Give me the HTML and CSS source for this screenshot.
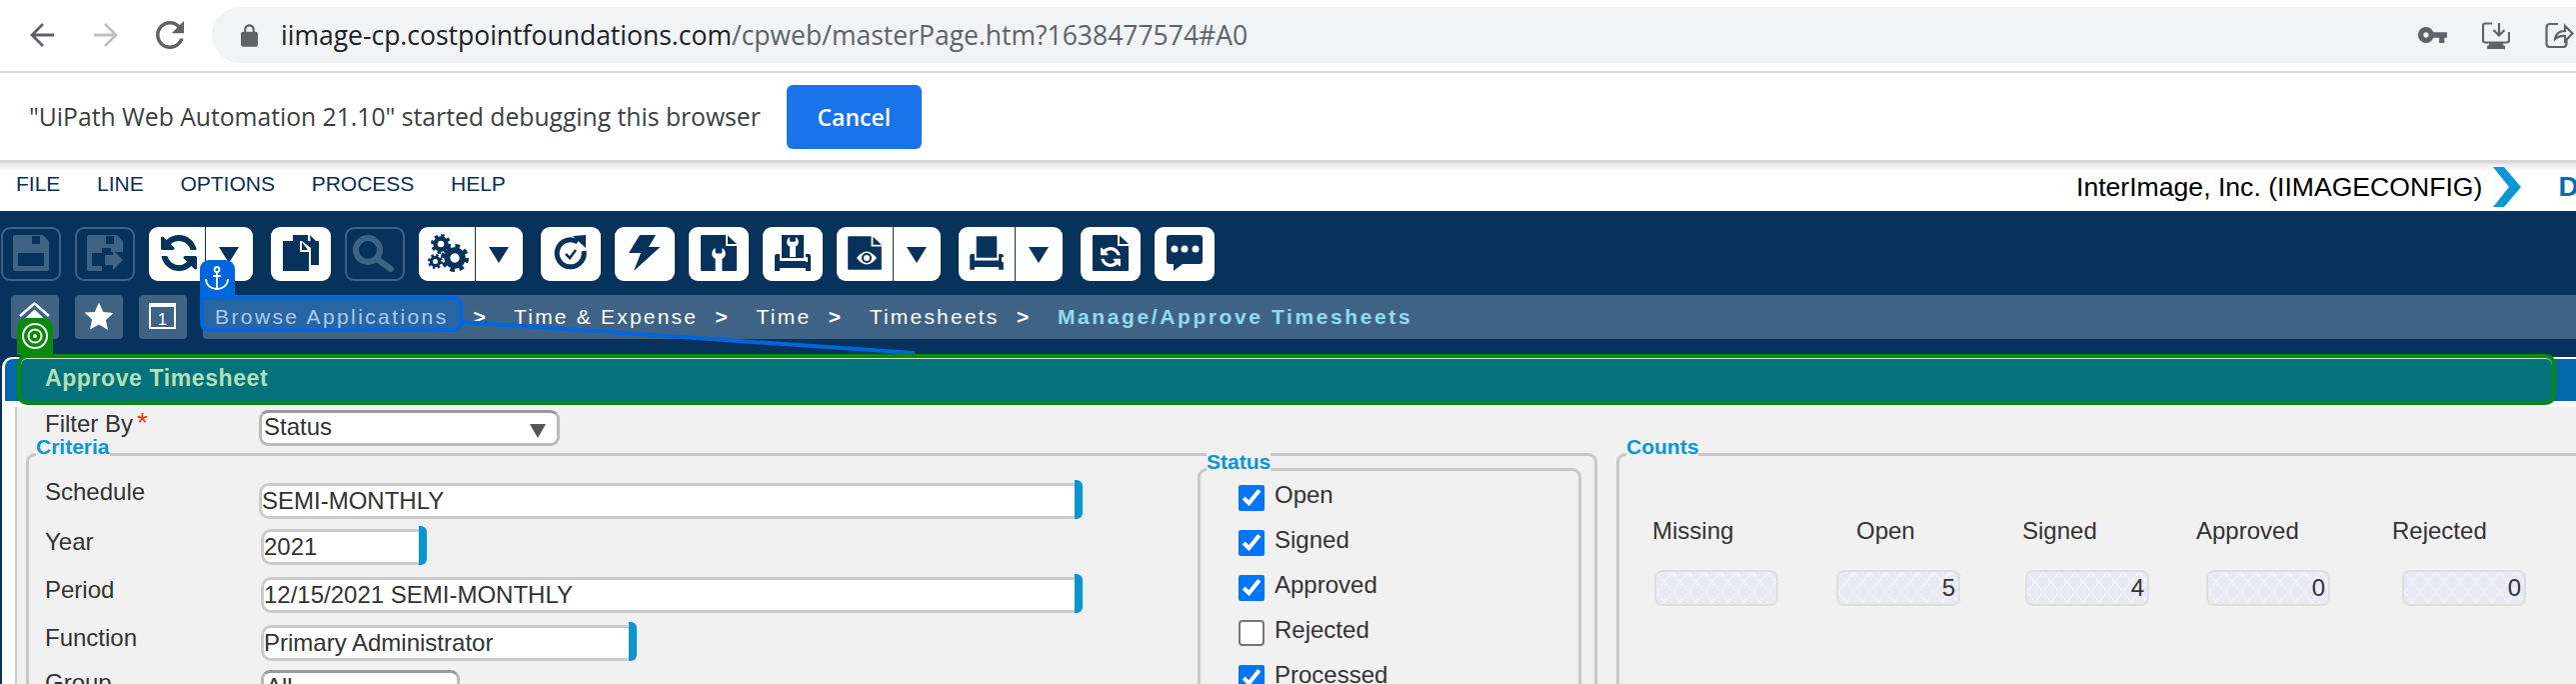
FILE: index.html
```html
<!DOCTYPE html>
<html lang="en">
<head>
    <meta charset="UTF-8">
    <title>Approve Timesheet</title>
    <link rel="stylesheet" href="styles.css">
</head>
<body>
    <svg class="sprite" width="0" height="0">
        <symbol id="sync" viewBox="0 0 1536 1536">
            <path transform="translate(1536 0) scale(-1 1)" d="M1511 928q0 5-1 7-64 268-268 434.5t-478 166.5q-146 0-282.5-55t-243.5-157l-129 129q-19 19-45 19t-45-19-19-45v-448q0-26 19-45t45-19h448q26 0 45 19t19 45-19 45l-137 137q71 66 161 102t187 36q134 0 250-65t186-179q11-17 53-117 8-23 30-23h192q13 0 22.5 9.5t9.5 22.5zm25-800v448q0 26-19 45t-45 19h-448q-26 0-45-19t-19-45 19-45l138-138q-148-137-349-137-134 0-250 65t-186 179q-11 17-53 117-8 23-30 23h-199q-13 0-22.5-9.5t-9.5-22.5v-7q65-268 270-434.5t480-166.5q146 0 284 55.5t245 156.5l130-129q19-19 45-19t45 19 19 45z"/>
        </symbol>
        <symbol id="gear" viewBox="0 0 24 24">
            <circle cx="12" cy="12" r="6.6" fill="none" stroke="currentColor" stroke-width="5.2"/>
            <circle cx="12" cy="12" r="10" fill="none" stroke="currentColor" stroke-width="4" stroke-dasharray="3.9 3.95"/>
        </symbol>
        <symbol id="doc" viewBox="0 0 60 54">
            <path d="M12 9q0-1 1-1h24v11h11v24q0 1-1 1H13q-1 0-1-1z"/>
            <path d="M39 8.500l9 8.500h-9z"/>
        </symbol>
        <symbol id="floppy" viewBox="0 0 60 54">
            <path fill-rule="evenodd" d="M12 10q0-2 2-2h28l6 6v28q0 2-2 2H14q-2 0-2-2zM31 9v8h8V9zM17 26v13h26V26z"/>
        </symbol>
        <symbol id="printer" viewBox="0 0 60 54">
            <path d="M19 8h22v23H19z"/>
            <path d="M12 29q0-2 2-2h3v7h26v-7h3q2 0 2 2v15h-5v-3H17v3h-5z"/>
        </symbol>
        <symbol id="wrench" viewBox="0 0 20 34">
            <path d="M5 0v6q0 2 2 2h6q2 0 2-2V0q5 3 5 8 0 6-5 8v18H5V16Q0 14 0 8 0 3 5 0z"/>
        </symbol>
    </svg>

    <header class="omnibar">
        <div class="nav-btns">
            <svg class="nav-arrow" viewBox="0 0 28 28"><path d="M26 14H4M15 3 4 14l11 11"/></svg>
            <svg class="nav-arrow nav-arrow-off" viewBox="0 0 28 28"><path d="M2 14h22M13 3l11 11-11 11"/></svg>
            <svg class="nav-reload" viewBox="4 4 16 16"><path d="M17.650 6.350C16.200 4.900 14.210 4 12 4c-4.420 0-7.990 3.580-7.990 8s3.570 8 7.990 8c3.730 0 6.840-2.550 7.730-6h-2.080c-.82 2.330-3.040 4-5.650 4-3.310 0-6-2.690-6-6s2.690-6 6-6c1.660 0 3.140.69 4.220 1.780L13 11h7V4l-2.350 2.350z"/></svg>
        </div>
        <div class="omnibox">
            <svg class="lock" viewBox="4 1 16 21"><path d="M18 8h-1V6c0-2.760-2.240-5-5-5S7 3.240 7 6v2H6c-1.100 0-2 .9-2 2v10c0 1.100.9 2 2 2h12c1.100 0 2-.9 2-2V10c0-1.100-.9-2-2-2zM9 6c0-1.660 1.340-3 3-3s3 1.340 3 3v2H9V6z"/></svg>
            <div class="url">iimage-cp.costpointfoundations.com<span class="url-path">/cpweb/masterPage.htm?1638477574#A0</span></div>
            <div class="omni-icons">
                <svg class="omni-key" viewBox="1 6 22 12"><path d="M12.650 10C11.830 7.670 9.610 6 7 6c-3.310 0-6 2.690-6 6s2.690 6 6 6c2.610 0 4.830-1.670 5.650-4H17v4h4v-4h2v-4H12.650zM7 14c-1.100 0-2-.9-2-2s.9-2 2-2 2 .9 2 2-.9 2-2 2z"/></svg>
                <svg class="omni-save" viewBox="0 0 28 27"><path class="omni-line" d="M10 1.500H3q-2 0-2 2v15q0 2 2 2h22q2 0 2-2V10M17 1v12M11.500 8l5.500 5.500L22.500 8"/><path d="M7 20h14v3l2 1v3H5v-3l2-1z"/></svg>
                <svg class="omni-share" viewBox="0 0 29 26"><path class="omni-line" d="M13 2H5Q1.500 2 1.500 5.500v16Q1.500 25 5 25h13q3.500 0 3.500-3.500V18M10 17q1-8 10-8V4l7.500 7.500L20 19v-5q-6-.5-10 3z"/></svg>
            </div>
        </div>
    </header>

    <div class="infobar">
        <span class="info-text">"UiPath Web Automation 21.10" started debugging this browser</span>
        <button type="button" class="cancel-btn">Cancel</button>
    </div>

    <nav class="menubar">
        <a>FILE</a>
        <a>LINE</a>
        <a>OPTIONS</a>
        <a>PROCESS</a>
        <a>HELP</a>
        <div class="company">
            <span class="company-name">InterImage, Inc. (IIMAGECONFIG)</span>
            <svg class="company-chevron" viewBox="0 0 28 40"><path d="M0 0h11l17 20-17 20H0l16-20z"/></svg>
            <span class="company-next">D</span>
        </div>
    </nav>

    <div class="toolbar">
        <button class="tool tool-off"><svg viewBox="0 0 60 54"><use href="#floppy"/></svg></button>
        <button class="tool tool-off"><svg viewBox="0 0 60 54"><path fill-rule="evenodd" d="M12 10q0-2 2-2h28l6 6v11H36v-4l-9 0v5H17v13h10v5H14q-2 0-2-2zM31 9v8h8V9z"/><path d="M30 28h8v-5l10 10-10 10v-5h-8z"/></svg></button>
        <div class="tool tool-split">
            <svg class="tool-main" viewBox="0 0 56 54"><use href="#sync" x="12" y="8" width="36" height="36"/></svg>
            <span class="caret"></span>
        </div>
        <button class="tool"><svg viewBox="0 0 60 54"><path d="M22 8h15v6l11 0v24h-8V21l-9-7h-9z"/><path d="M39 8l9 9h-8z"/><path d="M12 14h17v11h9v19H12z"/><path d="M31 15l6 8h-6z"/></svg></button>
        <button class="tool tool-off"><svg viewBox="0 0 60 54"><circle cx="23" cy="23" r="12" fill="none" stroke="currentColor" stroke-width="6"/><path d="M32 32l14 10" stroke="currentColor" stroke-width="6" stroke-linecap="round"/></svg></button>
        <div class="tool tool-split">
            <svg class="tool-main" viewBox="0 0 56 54"><use href="#gear" x="12" y="7" width="20" height="20"/><use href="#gear" x="9" y="27" width="15" height="15"/><use href="#gear" x="22" y="17" width="28" height="28"/></svg>
            <span class="caret"></span>
        </div>
        <button class="tool"><svg viewBox="0 0 60 54"><path d="M37 15A13.500 13.500 0 1 0 43 24" fill="none" stroke="currentColor" stroke-width="5"/><path d="M32 9l13-1 0 13z"/><path d="M25 27l4 4 6-8" fill="none" stroke="currentColor" stroke-width="2.500"/></svg></button>
        <button class="tool"><svg viewBox="0 0 60 54"><path d="M41 8H25L14 26h12l-7 18 26.500-24H34z"/></svg></button>
        <button class="tool"><svg viewBox="0 0 60 54"><use href="#doc"/><use href="#wrench" class="icon-white" x="23" y="21" width="14" height="23"/></svg></button>
        <button class="tool"><svg viewBox="0 0 60 54"><use href="#printer"/><use href="#wrench" class="icon-white" x="24" y="10" width="12" height="20"/><path class="icon-white" d="M43 30h2v5h-2z"/></svg></button>
        <div class="tool tool-split">
            <svg class="tool-main" viewBox="0 0 56 54"><use href="#doc"/><path class="icon-white" d="M20 31q5-6.500 10-6.500T40 31q-5 6.500-10 6.500T20 31z"/><circle cx="30" cy="31" r="4" fill="none" stroke="currentColor" stroke-width="2"/></svg>
            <span class="caret"></span>
        </div>
        <div class="tool tool-split">
            <svg class="tool-main" viewBox="0 0 56 54"><use href="#printer"/><path class="icon-white" d="M43 30h2v5h-2z"/></svg>
            <span class="caret"></span>
        </div>
        <button class="tool"><svg viewBox="0 0 60 54"><use href="#doc"/><use href="#sync" class="icon-white" x="20" y="20" width="20" height="20"/></svg></button>
        <button class="tool"><svg viewBox="0 0 60 54"><path d="M15 8h30q3 0 3 3v23q0 3-3 3H28l-9 7v-7h-4q-3 0-3-3V11q0-3 3-3z"/><circle class="icon-white" cx="20" cy="22" r="3.500"/><circle class="icon-white" cx="30" cy="22" r="3.500"/><circle class="icon-white" cx="41" cy="22" r="3.500"/></svg></button>
    </div>

    <div class="navrow">
        <a class="navsq"><svg viewBox="0 0 48 44"><path d="M9 21 23.500 8.500 38 21" fill="none" stroke="#fff" stroke-width="2.500"/><path d="M10 27 23.500 14.500 37 27z" fill="#fff"/></svg></a>
        <a class="navsq"><svg viewBox="0 0 48 44"><path d="M24 7.500l4.300 9.500 10.200 1.100-7.600 6.900 2.100 10.100L24 29.500l-9 5.100 2.100-10.100-7.600-6.900L19.700 17z" fill="#fff"/></svg></a>
        <a class="navsq"><svg viewBox="0 0 48 44"><rect x="11" y="9" width="25" height="24" fill="none" stroke="#fff" stroke-width="2"/><path d="M10 8h27v4H10z" fill="#fff"/><text x="23.500" y="30" class="cal-num">1</text></svg></a>
        <div class="crumbs">
            <a class="crumb-first">Browse Applications</a><i class="sep-first">&gt;</i>
            <a>Time &amp; Expense</a><i>&gt;</i>
            <a>Time</a><i>&gt;</i>
            <a>Timesheets</a><i>&gt;</i>
            <b>Manage/Approve Timesheets</b>
        </div>
    </div>

    <main class="panel">
        <div class="panel-head"><h1 class="panel-title">Approve Timesheet</h1></div>
        <div class="panel-body">
            <div class="filter-row">
                <label class="filter-label">Filter By<span class="req">*</span></label>
                <div class="select select-filter">Status</div>
            </div>

            <div class="groups">
                <section class="group group-criteria">
                    <h2 class="group-title">Criteria</h2>
                    <div class="criteria-inner">
                        <div class="criteria-form">
                            <label class="row-label row-label-first">Schedule</label>
                            <div class="field field-req field-first"><input type="text" value="SEMI-MONTHLY"></div>
                            <label class="row-label">Year</label>
                            <div class="field field-req field-year"><input type="text" value="2021"></div>
                            <label class="row-label">Period</label>
                            <div class="field field-req"><input type="text" value="12/15/2021 SEMI-MONTHLY"></div>
                            <label class="row-label">Function</label>
                            <div class="field field-req field-func"><input type="text" value="Primary Administrator"></div>
                            <label class="row-label">Group</label>
                            <div class="select select-group">All</div>
                        </div>

                        <section class="group group-status">
                            <h2 class="group-title">Status</h2>
                            <div class="checks">
                                <label class="check"><input type="checkbox" checked><span>Open</span></label>
                                <label class="check"><input type="checkbox" checked><span>Signed</span></label>
                                <label class="check"><input type="checkbox" checked><span>Approved</span></label>
                                <label class="check"><input type="checkbox"><span>Rejected</span></label>
                                <label class="check"><input type="checkbox" checked><span>Processed</span></label>
                            </div>
                        </section>
                    </div>
                </section>

                <section class="group group-counts">
                    <h2 class="group-title">Counts</h2>
                    <div class="counts">
                        <span class="count-label lbl-missing">Missing</span>
                        <span class="count-label lbl-open">Open</span>
                        <span class="count-label lbl-signed">Signed</span>
                        <span class="count-label lbl-approved">Approved</span>
                        <span class="count-label lbl-rejected">Rejected</span>
                        <div class="count-box"></div>
                        <div class="count-box">5</div>
                        <div class="count-box">4</div>
                        <div class="count-box">0</div>
                        <div class="count-box">0</div>
                    </div>
                </section>
            </div>
        </div>
    </main>

    <!-- highlight drawn by the automation tool, sits over the page -->
    <div class="hl-target"></div>
    <div class="hl-target-tag">
        <svg viewBox="0 0 28 28" width="28" height="28"><circle cx="14" cy="14" r="12" /><circle cx="14" cy="14" r="6.500"/><circle class="hl-dot" cx="14" cy="14" r="2"/></svg>
    </div>
    <svg class="hl-line" width="2577" height="684"><path d="M463 322 915 353"/></svg>
    <div class="hl-anchor-tag">
        <svg viewBox="0 0 24 24" width="24" height="24"><circle cx="12" cy="3.500" r="2.500"/><path d="M12 6v17M8 10h8M1 13c0 6 5 10 11 10s11-4 11-10"/></svg>
    </div>
    <div class="hl-anchor"></div>
</body>
</html>
```

FILE: styles.css
```css
* {
    box-sizing: border-box;
}
html, body {
    margin: 0;
    height: 684px;
    overflow: hidden;
}
body {
    position: relative;
    display: flex;
    flex-direction: column;
    background-color: #06325c;
    font-family: "Liberation Sans", Arial, sans-serif;
    color: #333;
}
.sprite {
    position: absolute;
}
button {
    font-family: inherit;
}

/* browser chrome */
.omnibar {
    height: 73px;
    flex: none;
    display: flex;
    padding: 7px 0 8px 28px;
    background-color: #fff;
    border-bottom: 2px solid #dadce0;
}
.nav-btns {
    display: flex;
    align-items: center;
    gap: 36px;
    margin-right: 28px;
}
.nav-arrow {
    width: 28px;
    height: 28px;
    fill: none;
    stroke: #5f6368;
    stroke-width: 2.8;
}
.nav-arrow-off {
    stroke: #bdc1c6;
}
.nav-reload {
    width: 28px;
    height: 28px;
    fill: #5f6368;
}
.omnibox {
    flex: 1;
    display: flex;
    align-items: center;
    padding: 0 2px 0 29px;
    background-color: #f1f3f4;
    border-radius: 28px 0 0 28px;
}
.lock {
    width: 17px;
    height: 23px;
    fill: #5f6368;
    margin-right: 23px;
}
.url {
    font-family: "Open Sans", sans-serif;
    font-size: 26.500px;
    color: #202124;
    white-space: nowrap;
}
.url-path {
    color: #5f6368;
}
.omni-icons {
    margin-left: auto;
    display: flex;
    align-items: center;
    gap: 35px;
    fill: #5f6368;
}
.omni-key {
    width: 29px;
    height: 16px;
}
.omni-save {
    width: 28px;
    height: 27px;
}
.omni-share {
    width: 29px;
    height: 26px;
}
.omni-line {
    fill: none;
    stroke: #5f6368;
    stroke-width: 2.200;
}
.infobar {
    height: 90px;
    flex: none;
    display: flex;
    align-items: center;
    padding-left: 29px;
    gap: 26px;
    background-color: #fff;
    border-bottom: 3px solid #d6d6d6;
}
.info-text {
    font-family: "Open Sans", sans-serif;
    font-size: 24.700px;
    color: #3c4043;
}
.cancel-btn {
    width: 135px;
    height: 64px;
    background-color: #1a73e8;
    color: #fff;
    border: none;
    border-radius: 6px;
    font-family: "Open Sans", sans-serif;
    font-size: 23px;
    font-weight: 600;
}

/* app menu */
.menubar {
    height: 48px;
    flex: none;
    display: flex;
    align-items: center;
    gap: 36.700px;
    padding: 0 0 6px 16px;
    background: linear-gradient(#e6e6e6, #fff 8px);
    color: #0b2f55;
    font-size: 21px;
}
.company {
    margin: 0 0 -6px auto;
    align-self: stretch;
    display: flex;
    align-items: center;
    font-size: 26.600px;
    color: #000;
    width: 500px;
    overflow: hidden;
    flex: none;
    white-space: nowrap;
}
.company-name {
    flex: none;
}
.company-chevron {
    width: 28px;
    height: 40px;
    fill: #0a97d6;
    margin: 0 37px 0 11px;
    flex: none;
}
.company-next {
    color: #0a6ab0;
    font-size: 28px;
    font-weight: bold;
}

/* icon toolbar */
.toolbar {
    flex: none;
    display: flex;
    gap: 14px;
    padding: 16px 0 0 1px;
}
.tool {
    width: 60px;
    height: 54px;
    padding: 0;
    background-color: #fff;
    border: none;
    border-radius: 9px;
    color: #06325c;
    fill: #06325c;
    display: block;
}
.tool svg {
    display: block;
    width: 60px;
    height: 54px;
}
.tool-off {
    background: transparent;
    border: 2px solid #3f6384;
    color: #3f6384;
    fill: #3f6384;
}
.tool-off svg {
    margin: -2px;
}
.tool-split {
    width: 104px;
    display: flex;
    margin-right: 4px;
}
.tool .tool-main {
    width: 57px;
    flex: none;
    border-right: 1.500px solid #06325c;
}
.caret {
    width: 0;
    height: 0;
    margin: 20px 0 0 13px;
    border-left: 10px solid transparent;
    border-right: 10px solid transparent;
    border-top: 16px solid #06325c;
}
.icon-white {
    fill: #fff;
}

/* nav squares and breadcrumb */
.navrow {
    flex: none;
    display: flex;
    gap: 16px;
    height: 44px;
    margin-top: 14px;
    padding-left: 11px;
}
.navsq {
    width: 48px;
    background-color: #3f6384;
    border-radius: 4px;
}
.navsq svg {
    display: block;
    width: 48px;
    height: 44px;
}
.cal-num {
    fill: #fff;
    font-size: 17px;
    text-anchor: middle;
}
.crumbs {
    flex: 1;
    display: flex;
    align-items: center;
    padding-left: 12px;
    background-color: #3f6384;
    border-radius: 4px 0 0 4px;
    color: #fff;
    font-size: 21px;
    letter-spacing: 2.200px;
    white-space: nowrap;
}
.crumbs .crumb-first {
    letter-spacing: 2.400px;
}
.crumbs i {
    font-style: normal;
    font-weight: bold;
    margin: 0 26.500px 0 17.500px;
}
.crumbs .sep-first {
    margin: 0 26px 0 25px;
}
.crumbs b {
    color: #8fdcec;
    letter-spacing: 2.600px;
}

/* panel */
.panel {
    flex: 1;
    margin: 18px 0 0 2px;
    padding: 2px 0 0 3px;
    background-color: #fff;
    border-radius: 10px 0 0 0;
    display: flex;
    flex-direction: column;
    min-height: 0;
}
.panel-head {
    height: 42px;
    flex: none;
    padding-left: 40px;
    background-color: #0068ab;
    border-radius: 8px 0 0 0;
}
.panel-title {
    position: relative;
    z-index: 2;
    margin: 0;
    line-height: 38px;
    font-size: 23px;
    letter-spacing: 0.600px;
    color: #b5dfb5;
}
.panel-body {
    flex: 1;
    min-height: 0;
    margin: 6px 0 0 10px;
    border-left: 2px solid #c8c8c8;
    background-color: #f1f1f1;
    overflow: hidden;
    font-size: 24px;
}
.filter-row {
    display: flex;
    margin-top: 3px;
    padding-left: 28px;
    height: 36px;
}
.filter-label {
    width: 214px;
    line-height: 28px;
}
.req {
    color: #f03a17;
    font-size: 28px;
    margin-left: 4px;
    line-height: 20px;
}
.select {
    position: relative;
    height: 36px;
    padding-left: 2px;
    line-height: 28px;
    background-color: #fff;
    border: 3px solid #bbb;
    border-top-color: #999;
    border-radius: 9px;
}
.select::after {
    content: "";
    position: absolute;
    top: 11px;
    right: 11px;
    border-left: 8px solid transparent;
    border-right: 8px solid transparent;
    border-top: 14px solid #555;
}
.select-filter {
    width: 301px;
}
.select-group {
    width: 199px;
}

/* fieldset-like groups */
.groups {
    display: flex;
    gap: 19px;
    margin-top: 7px;
    padding-left: 9px;
}
.group {
    border: 3px solid #c8c8c8;
    border-radius: 9px;
}
.group-title {
    width: fit-content;
    margin: -22px 0 0 7px;
    padding: 0;
    background-color: #f1f1f1;
    color: #0b96d8;
    font-size: 21px;
    line-height: 26px;
}
.group-criteria {
    flex: none;
    width: 1572px;
    height: 400px;
}
.criteria-inner {
    display: flex;
}
.criteria-form {
    width: 1169px;
    flex: none;
    margin-top: 23px;
    padding-left: 16px;
    display: grid;
    grid-template-columns: 216px 822px;
    grid-template-rows: 46px 48px 48px 45px 36px;
}
.row-label {
    line-height: 26px;
}
.row-label-first {
    margin-top: -4px;
}
.field {
    position: relative;
    height: 36px;
    border: 3px solid #ccc;
    border-radius: 10px;
    background-color: #fff;
}
.field input {
    display: block;
    width: 100%;
    height: 30px;
    padding: 0;
    border: none;
    background: transparent;
    outline: none;
    font-family: inherit;
    font-size: 24px;
    color: #333;
}
.field-req::after {
    content: "";
    position: absolute;
    top: -6px;
    right: -3px;
    bottom: -3px;
    width: 8px;
    background-color: #0a96d6;
    border-radius: 0 6px 6px 0;
}
.field-first {
    margin-left: -2px;
    width: 824px;
}
.field-year {
    width: 166px;
}
.field-func {
    width: 376px;
}
.group-status {
    flex: none;
    width: 384px;
    height: 300px;
    margin-top: 8px;
}
.group-status .group-title {
    margin-left: 6px;
}
.checks {
    display: grid;
    row-gap: 19px;
    margin-top: 10px;
    padding-left: 38px;
}
.check {
    display: flex;
    align-items: flex-start;
    gap: 10px;
    height: 26px;
}
.check input {
    width: 26px;
    height: 26px;
    margin: 0;
}
.check input:not(:checked) {
    appearance: none;
    background-color: #fff;
    border: 2px solid #767676;
    border-radius: 4px;
}
.check span {
    margin-top: -3px;
    line-height: 26px;
}
.group-counts {
    flex: none;
    width: 1000px;
    height: 400px;
}
.counts {
    display: grid;
    grid-template-columns: 182px 189px 181px 196px 124px;
    row-gap: 26px;
    margin: 58px 0 0 35px;
}
.count-label {
    line-height: 26px;
}
.lbl-missing { margin-left: -2px; }
.lbl-open { margin-left: 20px; }
.lbl-signed { margin-left: -3px; }
.lbl-approved { margin-left: -10px; }
.lbl-rejected { margin-left: -10px; }
.count-box {
    width: 124px;
    height: 36px;
    padding-right: 3px;
    line-height: 32px;
    text-align: right;
    border: 2px solid #dedede;
    border-radius: 8px;
    background-color: #e9e9f6;
    background-image:
        linear-gradient(to top right, transparent 48%, #f7f7fc 48%, #f7f7fc 52%, transparent 52%),
        linear-gradient(to top left, transparent 48%, #f7f7fc 48%, #f7f7fc 52%, transparent 52%);
    background-size: 16px 20px;
}

/* automation highlight overlay */
.hl-target {
    position: absolute;
    z-index: 1;
    left: 17px;
    top: 354px;
    width: 2540px;
    height: 51px;
    background-color: #04727a;
    border: 4px solid #0a8a0a;
    border-radius: 10px;
    box-shadow: inset 0 1px 0 #cfe5d5;
}
.hl-target-tag {
    position: absolute;
    z-index: 1;
    left: 17px;
    top: 318px;
    width: 36px;
    height: 37px;
    padding: 4px;
    background-color: #0a8a0a;
    border-radius: 9px 9px 0 0;
}
.hl-target-tag svg {
    display: block;
    fill: none;
    stroke: #fff;
    stroke-width: 2;
}
.hl-target-tag .hl-dot {
    fill: #fff;
    stroke: none;
}
.hl-line {
    position: absolute;
    left: 0;
    top: 0;
    fill: none;
    stroke: #0066dd;
    stroke-width: 4;
}
.hl-anchor-tag {
    position: absolute;
    left: 200px;
    top: 260px;
    width: 35px;
    height: 38px;
    padding: 6px 5px;
    background-color: #0066dd;
    border-radius: 9px 9px 0 0;
}
.hl-anchor-tag svg {
    display: block;
    fill: none;
    stroke: #fff;
    stroke-width: 1.800;
}
.hl-anchor {
    position: absolute;
    left: 200px;
    top: 296px;
    width: 263px;
    height: 36px;
    background-color: rgba(0, 102, 221, 0.35);
    border: 4px solid #0066dd;
    border-radius: 0 9px 9px 9px;
}
```
